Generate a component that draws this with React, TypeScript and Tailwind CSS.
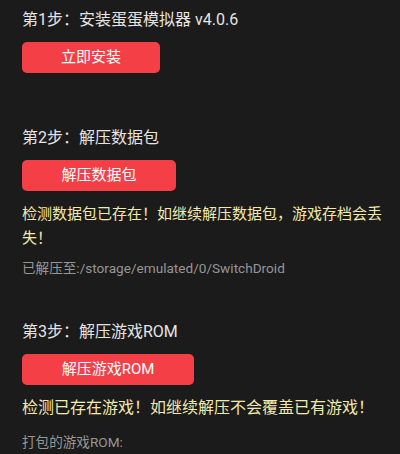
import React from 'react';

type Step = {
  title: string;
  action: string;
  width: string;
  warning?: string;
  warningSize?: string;
  note?: string;
  noteGap?: string;
};

const steps: Step[] = [
  { title: '第1步：安装蛋蛋模拟器 v4.0.6', action: '立即安装', width: 'w-[138px]' },
  {
    title: '第2步：解压数据包',
    action: '解压数据包',
    width: 'w-[154px]',
    warning: '检测数据包已存在！如继续解压数据包，游戏存档会丢失！',
    warningSize: 'text-[15px]',
    note: '已解压至:/storage/emulated/0/SwitchDroid',
    noteGap: 'mt-[8px]',
  },
  {
    title: '第3步：解压游戏ROM',
    action: '解压游戏ROM',
    width: 'w-[172px]',
    warning: '检测已存在游戏！如继续解压不会覆盖已有游戏！',
    warningSize: 'text-[16px]',
    note: '打包的游戏ROM:',
    noteGap: 'mt-[12px]',
  },
];

const StepBlock: React.FC<{ step: Step }> = ({ step }) => (
  <div className="flex flex-col items-start">
    <h2 className="text-[16px] leading-[24px] text-[#e4e4e4] font-normal">{step.title}</h2>
    <button
      className={`${step.width} h-[31px] mt-[10px] rounded-[5px] bg-[#f53f47] text-white text-[15px] flex items-center justify-center`}
    >
      {step.action}
    </button>
    {step.warning && (
      <p className={`mt-[11px] ${step.warningSize} leading-[24px] text-[#f1e9ad] pr-[16px]`}>{step.warning}</p>
    )}
    {step.note && <p className={`${step.noteGap} text-[13.6px] leading-[20px] text-[#969696]`}>{step.note}</p>}
  </div>
);

export default function App() {
  return (
    <div
      className="w-[400px] h-[454px] overflow-hidden bg-[#1b1b1b] pl-[22px] pt-[8px] flex flex-col gap-[42px]"
      style={{ fontFamily: 'Roboto, "Noto Sans CJK SC", sans-serif' }}
    >
      <div className="flex flex-col gap-[53px]">
        <StepBlock step={steps[0]} />
        <StepBlock step={steps[1]} />
      </div>
      <StepBlock step={steps[2]} />
    </div>
  );
}
